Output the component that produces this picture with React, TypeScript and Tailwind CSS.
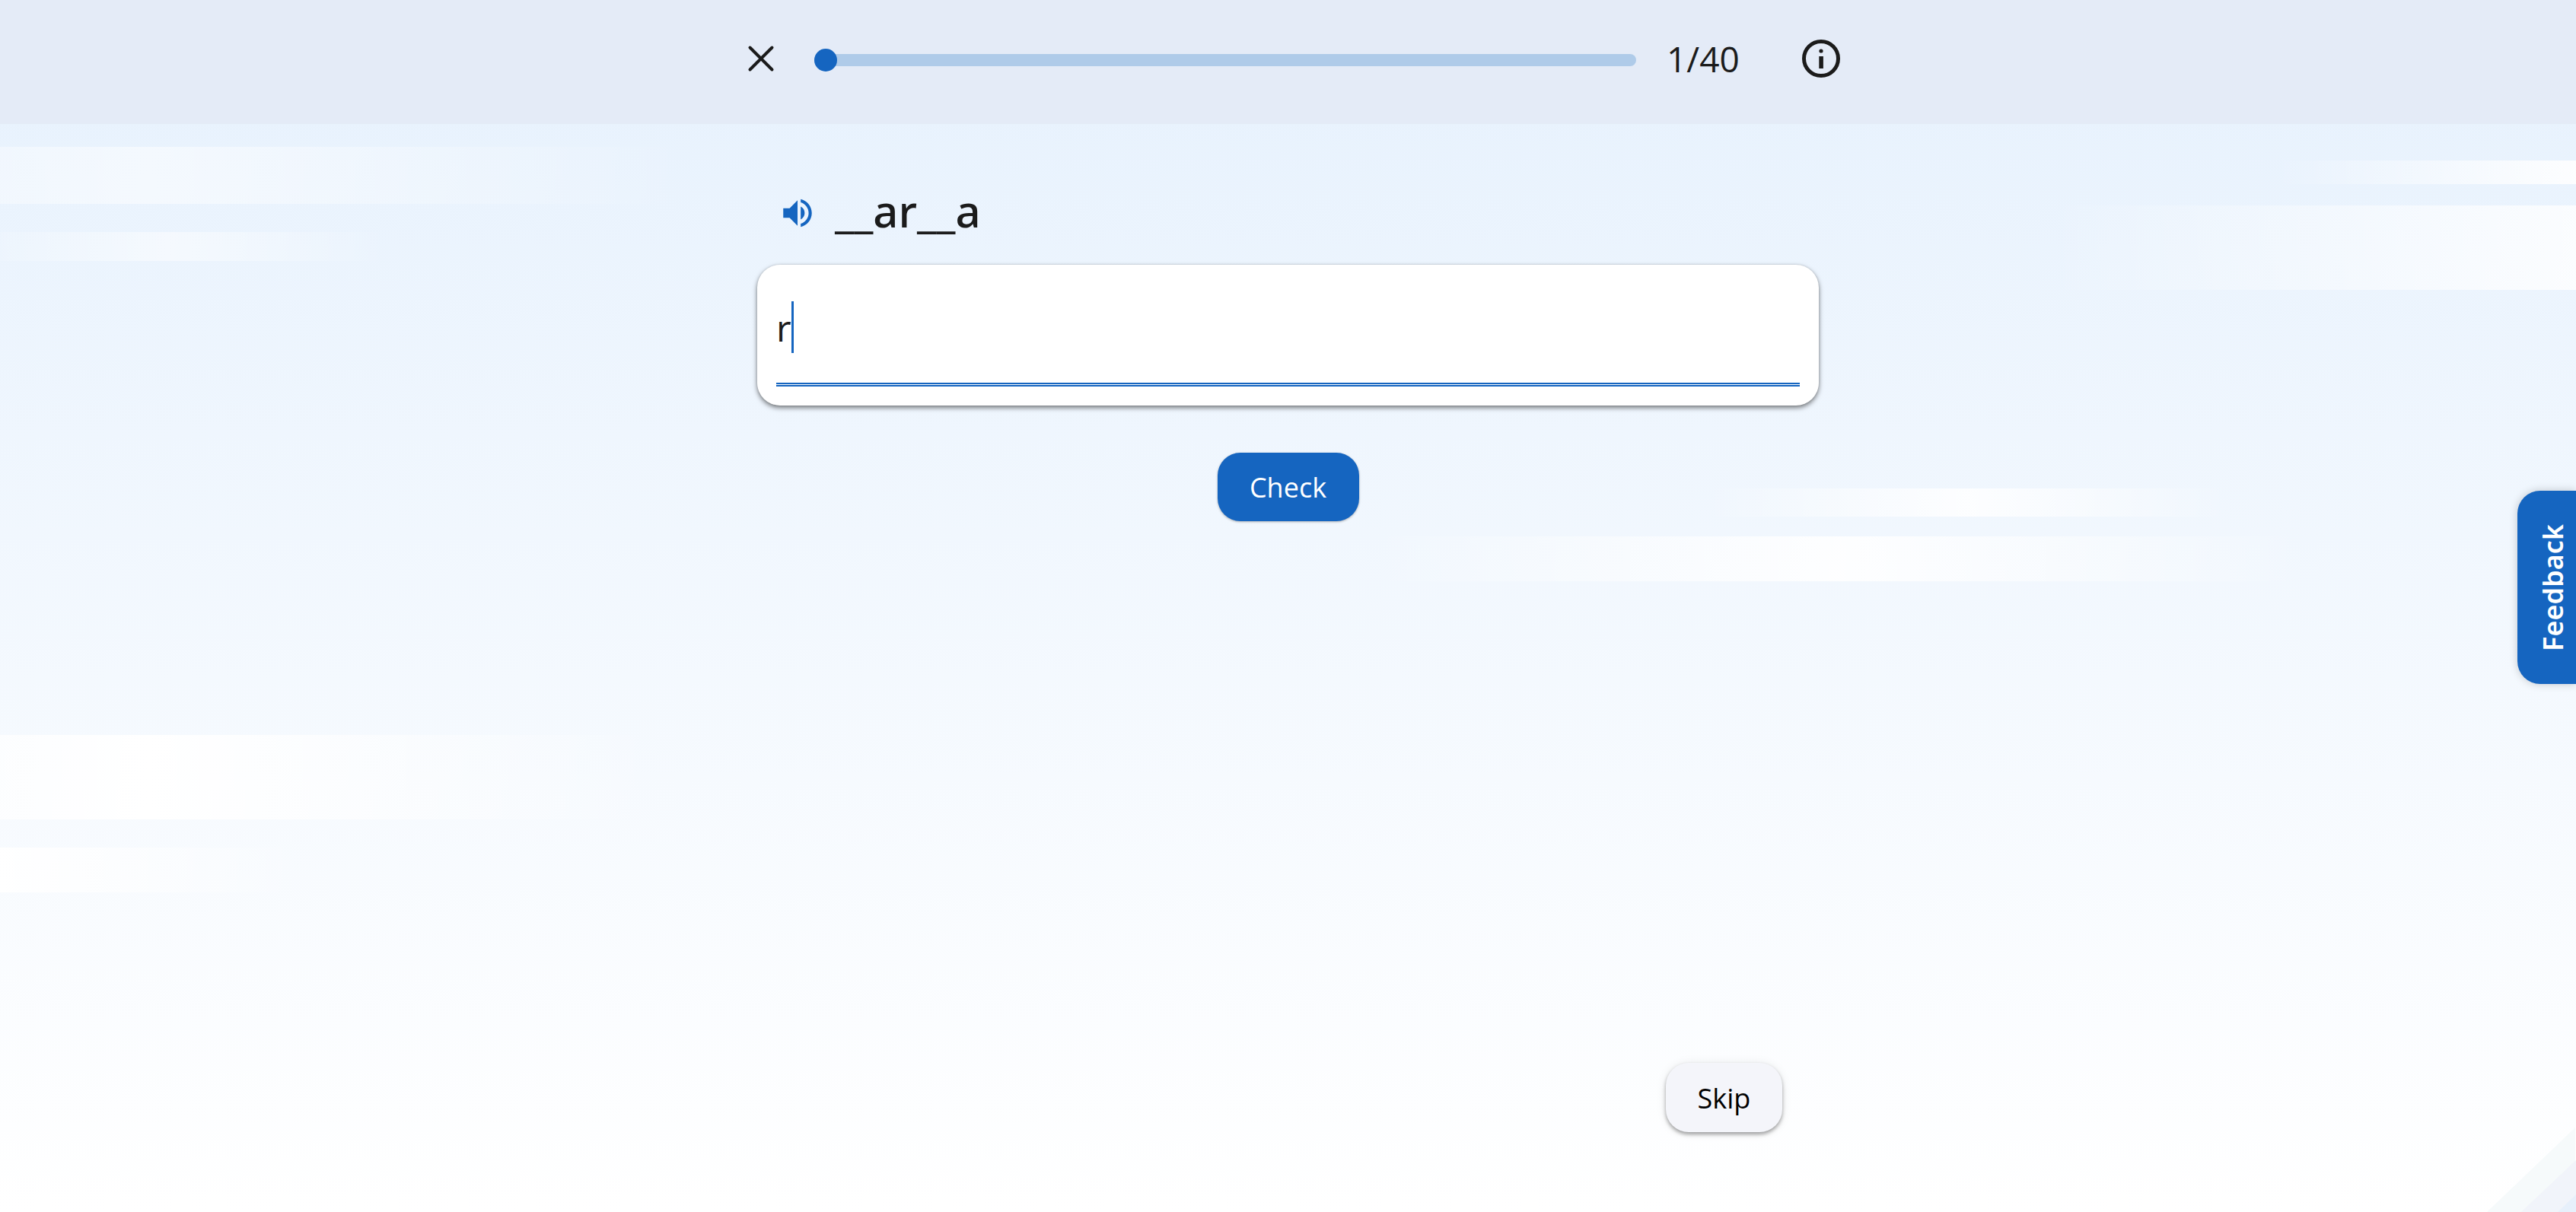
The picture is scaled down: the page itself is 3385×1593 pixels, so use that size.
import { useState } from "react";
import { MdVolumeUp } from "react-icons/md";

type Streak = { y: number; h: number; x: number; w: number; alpha: number };

const streaks: Streak[] = [
  { y: 193, h: 75, x: -520, w: 1430, alpha: 0.5 },
  { y: 305, h: 38, x: -70, w: 580, alpha: 0.5 },
  { y: 211, h: 31, x: 2990, w: 800, alpha: 0.9 },
  { y: 270, h: 111, x: 2690, w: 1400, alpha: 0.8 },
  { y: 642, h: 37, x: 2240, w: 690, alpha: 0.85 },
  { y: 705, h: 59, x: 1800, w: 1230, alpha: 0.9 },
  { y: 966, h: 111, x: -480, w: 1350, alpha: 1 },
  { y: 1114, h: 59, x: -420, w: 820, alpha: 1 },
];

function Backdrop() {
  return (
    <svg
      className="absolute inset-0 h-full w-full"
      viewBox="0 0 3385 1593"
      preserveAspectRatio="xMidYMid slice"
      aria-hidden="true"
    >
      <defs>
        {streaks.map((s, i) => (
          <linearGradient key={i} id={`streak-${i}`}>
            <stop offset="0" stopColor="#fff" stopOpacity="0" />
            <stop offset="0.5" stopColor="#fff" stopOpacity={s.alpha} />
            <stop offset="1" stopColor="#fff" stopOpacity="0" />
          </linearGradient>
        ))}
      </defs>
      {streaks.map((s, i) => (
        <rect key={i} x={s.x} y={s.y} width={s.w} height={s.h} fill={`url(#streak-${i})`} />
      ))}
      <path d="M3268 1593L3384 1482V1593Z" fill="#f6fafb" />
      <path d="M3313 1593L3385 1525V1593Z" fill="#f1f4fa" />
      <path d="M3361 1593L3385 1570V1593Z" fill="#e7f0fb" />
    </svg>
  );
}

function Header() {
  return (
    <header className="relative h-[163px] bg-[#e4ebf7]">
      <div className="mx-auto flex h-[153px] max-w-[1451px] items-center">
        <button type="button" aria-label="Close" className="flex size-[66px] items-center justify-center">
          <svg className="size-9" viewBox="0 0 36 36" fill="none" stroke="#1b1b1b" strokeWidth="4" strokeLinecap="round">
            <path d="M3.5 3.5L32.5 32.5M32.5 3.5L3.5 32.5" />
          </svg>
        </button>
        <div
          role="progressbar"
          aria-label="Progress"
          aria-valuemin={0}
          aria-valuemax={40}
          aria-valuenow={1}
          className="mt-1 ml-[37px] flex h-4 flex-1 items-center rounded-full bg-[#afcbe9]"
        >
          <div className="size-[30px] rounded-full bg-[#1565c0]" />
        </div>
        <span className="ml-10 w-[94px] font-['Open_Sans'] text-[46px] leading-[60px] font-medium whitespace-nowrap">
          1/40
        </span>
        <button type="button" aria-label="Information" className="ml-[84px] size-[50px]">
          <svg className="size-[50px]" viewBox="0 0 50 50">
            <circle cx="25" cy="25" r="22.5" fill="none" stroke="#1b1b1b" strokeWidth="5" />
            <circle cx="25" cy="15" r="2.6" fill="#1b1b1b" />
            <path d="M22.3 22h5.6v16h-5.6z" fill="#1b1b1b" />
          </svg>
        </button>
      </div>
    </header>
  );
}

export default function App() {
  const [answer, setAnswer] = useState("r");
  return (
    <div className="relative flex min-h-screen flex-col overflow-hidden bg-linear-to-b from-[#e6f1fd] to-white font-['Noto_Sans',sans-serif] text-[#1b1b1b]">
      <Backdrop />
      <Header />
      <main className="relative mx-auto flex w-full max-w-[1395px] flex-1 flex-col">
        <div className="mt-[79px] flex h-[76px] items-center gap-6 pl-7">
          <button type="button" aria-label="Play pronunciation" className="text-[#1565c0]">
            <MdVolumeUp className="size-[50px]" />
          </button>
          <label htmlFor="answer" className="pb-1.5 text-[58px] leading-[76px] font-medium">
            __ar__a
          </label>
        </div>
        <div className="mt-[30px] rounded-[30px] bg-white p-[25px] shadow-[0_3px_6px_rgba(0,0,0,0.5),0_0_3px_rgba(0,0,0,0.12)]">
          <div className="relative">
            <input
              id="answer"
              type="text"
              value={answer}
              onChange={(e) => setAnswer(e.target.value)}
              autoComplete="off"
              className="block h-[135px] w-full border-b-[5px] border-double border-[#1565c0] bg-transparent pb-4 font-['Open_Sans'] text-[48px] leading-[68px] font-medium caret-transparent outline-none"
            />
            <div
              className="pointer-events-none absolute top-[23px] left-0 flex h-[68px] font-['Open_Sans'] text-[48px] leading-[68px] font-medium"
              aria-hidden="true"
            >
              <span className="invisible whitespace-pre">{answer}</span>
              <span className="w-[3px] bg-[#1565c0]" />
            </div>
          </div>
        </div>
        <button
          type="button"
          className="mt-[62px] h-[90px] w-[186px] self-center rounded-[30px] bg-[#1565c0] pt-0.5 font-['Open_Sans'] text-[36px] leading-[48px] font-medium text-white shadow-[0_1px_3px_rgba(0,0,0,0.3)]"
        >
          Check
        </button>
        <div className="mt-auto flex justify-end pr-12 pb-[105px]">
          <button
            type="button"
            className="h-[91px] w-[153px] rounded-[30px] bg-[#f4f5fa] pt-0.5 font-['Open_Sans'] text-[36px] leading-[48px] font-medium text-black shadow-[0_3px_5px_rgba(0,0,0,0.35),0_1px_14px_rgba(0,0,0,0.08)]"
          >
            Skip
          </button>
        </div>
      </main>
      <button
        type="button"
        className="absolute top-[645px] right-0 flex h-[254px] w-[77px] items-center justify-center rounded-l-[30px] bg-[#1565c0] pl-4 text-[36px] leading-[48px] font-semibold text-white shadow-[0_0_12px_rgba(0,0,0,0.2)]"
      >
        <span className="rotate-180 [writing-mode:vertical-rl]">Feedback</span>
      </button>
    </div>
  );
}
